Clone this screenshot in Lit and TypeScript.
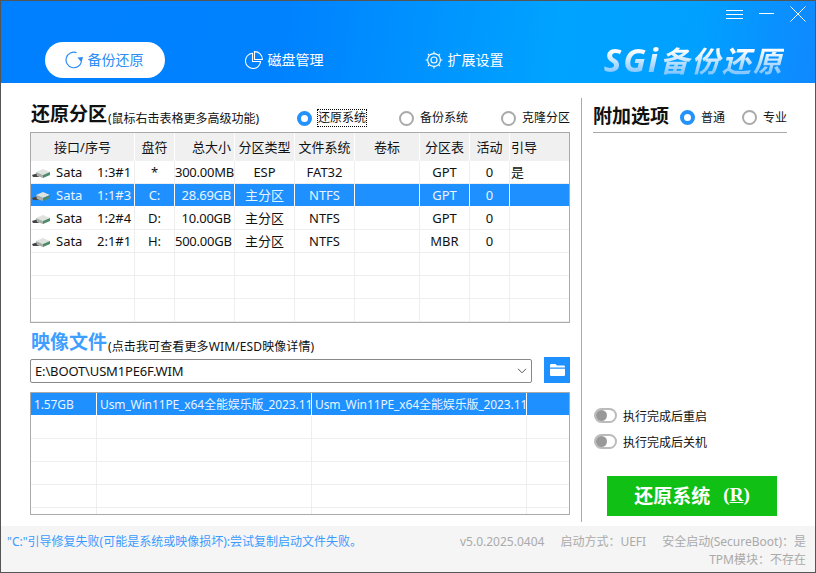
import { LitElement, html, css, svg } from "lit";
import { customElement } from "lit/decorators.js";

const rows1 = [
  ["Sata", "1:3#1", "*", "300.00MB", "ESP", "FAT32", "", "GPT", "0", "是"],
  ["Sata", "1:1#3", "C:", "28.69GB", "主分区", "NTFS", "", "GPT", "0", ""],
  ["Sata", "1:2#4", "D:", "10.00GB", "主分区", "NTFS", "", "GPT", "0", ""],
  ["Sata", "2:1#1", "H:", "500.00GB", "主分区", "NTFS", "", "MBR", "0", ""],
];
const head1 = ["接口/序号", "盘符", "总大小", "分区类型", "文件系统", "卷标", "分区表", "活动", "引导"];
const bootMode = "启动方式\uFF1AUEFI";
const secureBoot = "安全启动(SecureBoot)\uFF1A是";
const tpm = "TPM模块\uFF1A不存在";

const diskIcon = svg`<svg class="disk" viewBox="0 0 19 11" width="19" height="11">
  <polygon points="0,7 6,5 7,9 1,9" fill="#444"/>
  <polygon points="4,4 11,1 18,4 11,7" fill="#dfe3df"/>
  <polygon points="4,4 11,7 11,10 5,8" fill="#a9b0ab"/>
  <polygon points="11,7 18,4 18,7 11,10" fill="#4f8a68"/>
</svg>`;

@customElement("app-root")
export class AppRoot extends LitElement {
  static styles = css`
    :host {
      display: block;
      width: 816px;
      height: 573px;
      box-sizing: border-box;
      border: 1px solid #555;
      background: #fff;
      overflow: hidden;
      font-family: "Noto Sans", "Noto Sans CJK SC", sans-serif;
      font-size: 12px;
      color: #111;
    }
    .header {
      height: 82px;
      display: flex;
      flex-direction: column;
      background: linear-gradient(98deg, #0080ff 0%, #0082ff 35%, #00a3ff 68%, #00a0ff 85%, #1088ff 100%);
    }
    .controls {
      height: 41px;
      display: flex;
      justify-content: flex-end;
      align-items: flex-start;
      gap: 15px;
      padding: 5px 9px 0 0;
      box-sizing: border-box;
    }
    .controls svg { display: block; }
    .nav {
      display: flex;
      align-items: flex-start;
      padding-left: 44px;
      gap: 60px;
    }
    .tab {
      width: 120px;
      height: 36px;
      box-sizing: border-box;
      border-radius: 18px;
      display: flex;
      align-items: center;
      justify-content: center;
      gap: 5px;
      padding: 0 2px 2px 0;
      color: #fff;
      font-size: 14px;
    }
    .tab svg { margin-top: 2px; }
    .tab.active { background: #fff; color: #2a8cf5; }
    .logo {
      margin-left: auto;
      margin-right: 31px;
      font-size: 29px;
      line-height: 36px;
      font-weight: 700;
      font-style: italic;
      letter-spacing: 2px;
      background: linear-gradient(180deg, #ffffff 22%, #86c8ff 82%);
      -webkit-background-clip: text;
      background-clip: text;
      color: transparent;
      white-space: nowrap;
    }
    .logo span { font-size: 33px; font-weight: 700; letter-spacing: 2px; }
    .main { height: 443px; display: flex; padding: 15px 0 4px; box-sizing: border-box; }
    .left {
      width: 580px;
      padding: 2px 11px 0 29px;
      box-sizing: border-box;
      display: flex;
      flex-direction: column;
    }
    .titlerow {
      height: 32px;
      display: grid;
      grid-template-columns: 267px 102px 102px auto;
      align-items: center;
    }
    .titlerow .radio, .rtitle .radio { margin-top: 4px; }
    .title { font-size: 19px; font-weight: 700; line-height: 28px; white-space: nowrap; padding-left: 1px; }
    .title small { font-size: 12px; font-weight: 400; vertical-align: -1.5px; margin-left: 1px; }
    .title small.dark { color: #111; letter-spacing: 0.12px; }
    .title.blue { color: #3f9fff; }
    .radio { display: flex; align-items: center; gap: 6px; white-space: nowrap; }
    .radio i {
      width: 15px;
      height: 15px;
      box-sizing: border-box;
      border-radius: 50%;
      border: 2px solid #aaa;
      background: #fff;
      flex: none;
    }
    .radio.on i { border: 4px solid #2392fb; }
    .radio span { line-height: 16px; }
    .radio.focus span { outline: 1px dotted #000; }
    .table {
      border: 1px solid #aaa;
      box-sizing: border-box;
      overflow: hidden;
      font-size: 13px;
    }
    .t1 { height: 191px; }
    .t2 { height: 123px; margin-top: 9px; font-size: 12px; letter-spacing: -0.12px; }
    .row { display: grid; height: 23px; box-sizing: border-box; border-bottom: 1px solid #eee; }
    .t1 .row { grid-template-columns: 104px 40px 60px 60px 60px 65px 50px 40px 1fr; }
    .t2 .row { grid-template-columns: 66px 215px 215px 1fr; }
    .row > div {
      border-right: 1px solid #eee;
      line-height: 22px;
      text-align: center;
      white-space: nowrap;
      overflow: hidden;
    }
    .row > div:last-child { border-right: none; }
    .hrow { height: 28px; background: #f0f0f0; border-bottom: none; }
    .hrow > div { border-right-color: #fff; line-height: 28px; }
    .row.sel { background: #1e90ff; color: #eaf4ff; border-bottom-color: #fff; }
    .row.sel > div { border-right-color: #fff; }
    .t1 .row > .lead { display: flex; align-items: center; text-align: left; padding-left: 1px; }
    .lead .disk { flex: none; margin-top: 2px; }
    .lead .kind { margin-left: 5px; width: 41px; }
    .num { letter-spacing: -0.25px; }
    .t1 .row > .size { text-align: right; padding-right: 3px; }
    .t1 .row > .boot { text-align: left; padding-left: 1px; }
    .t2 .row > div { text-align: left; padding-left: 3px; line-height: 24px; }
    .imgtitle {
      margin-top: 5px;
      height: 29px;
      box-sizing: border-box;
      padding-top: 4px;
      display: flex;
      align-items: center;
    }
    .pathrow { display: flex; align-items: flex-end; gap: 12px; height: 26px; }
    .combo {
      flex: 1;
      height: 24px;
      box-sizing: border-box;
      border: 1px solid #888;
      border-radius: 2px;
      display: flex;
      align-items: center;
      justify-content: space-between;
      padding: 0 4px;
      font-size: 13px;
      letter-spacing: -0.15px;
    }
    .folder {
      width: 26px;
      height: 26px;
      background: #1e90ff;
      display: flex;
      align-items: center;
      justify-content: center;
      flex: none;
    }
    .right {
      flex: 1;
      border-left: 1px solid #aaa;
      padding: 2px 28px 0 11px;
      display: flex;
      flex-direction: column;
    }
    .rtitle {
      height: 33px;
      box-sizing: border-box;
      border-bottom: 1px solid #aaa;
      display: grid;
      grid-template-columns: 87px 62px auto;
      align-items: center;
      padding-bottom: 1px;
    }
    .rtitle .title { padding-left: 0; }
    .toggles {
      margin-top: auto;
      display: flex;
      flex-direction: column;
      gap: 11px;
      margin-bottom: 27px;
      padding-left: 1px;
    }
    .toggle { display: flex; align-items: center; gap: 6px; height: 15px; }
    .toggle i {
      width: 23px;
      height: 15px;
      box-sizing: border-box;
      border: 2px solid #bbb;
      border-radius: 8px;
      background: #fff;
      display: flex;
      align-items: center;
    }
    .toggle i::before {
      content: "";
      width: 11px;
      height: 11px;
      border-radius: 50%;
      background: #999;
    }
    .go {
      width: 170px;
      height: 40px;
      box-sizing: border-box;
      margin: 0 0 6px 14px;
      padding-bottom: 3px;
      background: #10c014;
      color: #fff;
      font-size: 19px;
      font-weight: 700;
      display: flex;
      align-items: center;
      justify-content: center;
      gap: 13px;
      white-space: nowrap;
    }
    .go b { font-family: "Liberation Serif", serif; font-weight: 700; font-size: 19px; }
    .footer {
      height: 46px;
      background: #f5f5f5;
      display: flex;
      justify-content: space-between;
      padding: 7px 9px 0 6px;
      box-sizing: border-box;
      line-height: 18px;
    }
    .msg { color: #3a9bff; white-space: nowrap; }
    .info { color: #aaa; text-align: right; }
    .info div:first-child { display: flex; gap: 16px; white-space: nowrap; }
  `;

  private radio(label: string, on = false, focus = false) {
    return html`<label class="radio ${on ? "on" : ""} ${focus ? "focus" : ""}"><i></i><span>${label}</span></label>`;
  }

  render() {
    const empty1 = [0, 1, 2];
    const empty2 = [0, 1, 2, 3, 4];
    return html`
      <div class="header">
        <div class="controls">
          <svg width="18" height="14" viewBox="0 0 18 14" stroke="#fff" fill="none">
            <path d="M0 4.5H17M0 8.5H17M0 12.5H17" />
          </svg>
          <svg width="16" height="10" viewBox="0 0 16 10" stroke="#fff" fill="none">
            <path d="M0 7.5H15" />
          </svg>
          <svg width="16" height="16" viewBox="0 0 16 16" stroke="#fff" fill="none">
            <path d="M.5.5L15.5 15.5M15.5.5L.5 15.5" />
          </svg>
        </div>
        <div class="nav">
          <div class="tab active">
            <svg width="18" height="18" viewBox="0 0 18 18" fill="none" stroke="#2a8cf5" stroke-width="1.2">
              <path d="M16.5 10.5A7.8 7.8 0 1 1 11.5 1.6" />
              <path d="M12.5 6.5L18 6L16.5 11.5Z" fill="#2a8cf5" stroke="none" />
            </svg>
            备份还原
          </div>
          <div class="tab">
            <svg width="18" height="18" viewBox="0 0 18 18" fill="none" stroke="#fff" stroke-width="1.1">
              <path d="M7.5 2.3A7.6 7.6 0 1 0 15.6 10.5H7.5Z" />
              <path d="M9.5.6A7.8 7.8 0 0 1 17.4 8.5H9.5Z" />
            </svg>
            磁盘管理
          </div>
          <div class="tab">
            <svg width="18" height="18" viewBox="0 0 18 18" fill="none" stroke="#fff" stroke-width="1.1">
              <circle cx="9" cy="9" r="6.4" />
              <circle cx="9" cy="9" r="3" />
              <path d="M9 .5V2.6M9 15.4V17.5M.5 9H2.6M15.4 9H17.5M3 3L4.5 4.5M15 3L13.5 4.5M3 15L4.5 13.5M15 15L13.5 13.5" />
            </svg>
            扩展设置
          </div>
          <div class="logo"><span>SGi</span>备份还原</div>
        </div>
      </div>
      <div class="main">
        <div class="left">
          <div class="titlerow">
            <div class="title">还原分区<small>(鼠标右击表格更多高级功能)</small></div>
            ${this.radio("还原系统", true, true)}
            ${this.radio("备份系统")}
            ${this.radio("克隆分区")}
          </div>
          <div class="table t1">
            <div class="row hrow">${head1.map((h, i) => html`<div class="${i === 2 ? "size" : i === 8 ? "boot" : ""}">${h}</div>`)}</div>
            ${rows1.map(
              (r, i) => html`<div class="row ${i === 1 ? "sel" : ""}">
                <div class="lead">${diskIcon}<span class="kind">${r[0]}</span><span>${r[1]}</span></div>
                <div>${r[2]}</div>
                <div class="size num">${r[3]}</div>
                <div>${r[4]}</div>
                <div>${r[5]}</div>
                <div>${r[6]}</div>
                <div>${r[7]}</div>
                <div>${r[8]}</div>
                <div class="boot">${r[9]}</div>
              </div>`
            )}
            ${empty1.map(() => html`<div class="row">${head1.map(() => html`<div></div>`)}</div>`)}
          </div>
          <div class="imgtitle">
            <div class="title blue">映像文件<small class="dark">(点击我可查看更多WIM/ESD映像详情)</small></div>
          </div>
          <div class="pathrow">
            <div class="combo">
              <span>E:\\BOOT\\USM1PE6F.WIM</span>
              <svg width="10" height="6" viewBox="0 0 10 6" fill="none" stroke="#555"><path d="M1 .8L5 4.8L9 .8" /></svg>
            </div>
            <div class="folder">
              <svg width="15" height="12" viewBox="0 0 15 12" fill="#fff">
                <path d="M0 1.2Q0 0 1.2 0H5.5L7 1.6H13.8Q15 1.6 15 2.8V3.6H0Z" />
                <path d="M0 4.8H15V10.8Q15 12 13.8 12H1.2Q0 12 0 10.8Z" />
              </svg>
            </div>
          </div>
          <div class="table t2">
            <div class="row sel">
              <div>1.57GB</div>
              <div>Usm_Win11PE_x64全能娱乐版_2023.11</div>
              <div>Usm_Win11PE_x64全能娱乐版_2023.11</div>
              <div></div>
            </div>
            ${empty2.map(() => html`<div class="row"><div></div><div></div><div></div><div></div></div>`)}
          </div>
        </div>
        <div class="right">
          <div class="rtitle">
            <div class="title">附加选项</div>
            ${this.radio("普通", true)}
            ${this.radio("专业")}
          </div>
          <div class="toggles">
            <div class="toggle"><i></i>执行完成后重启</div>
            <div class="toggle"><i></i>执行完成后关机</div>
          </div>
          <div class="go"><span>还原系统</span><b>(<u>R</u>)</b></div>
        </div>
      </div>
      <div class="footer">
        <div class="msg">"C:"引导修复失败(可能是系统或映像损坏):尝试复制启动文件失败。</div>
        <div class="info">
          <div><span>v5.0.2025.0404</span><span>${bootMode}</span><span>${secureBoot}</span></div>
          <div>${tpm}</div>
        </div>
      </div>
    `;
  }
}
